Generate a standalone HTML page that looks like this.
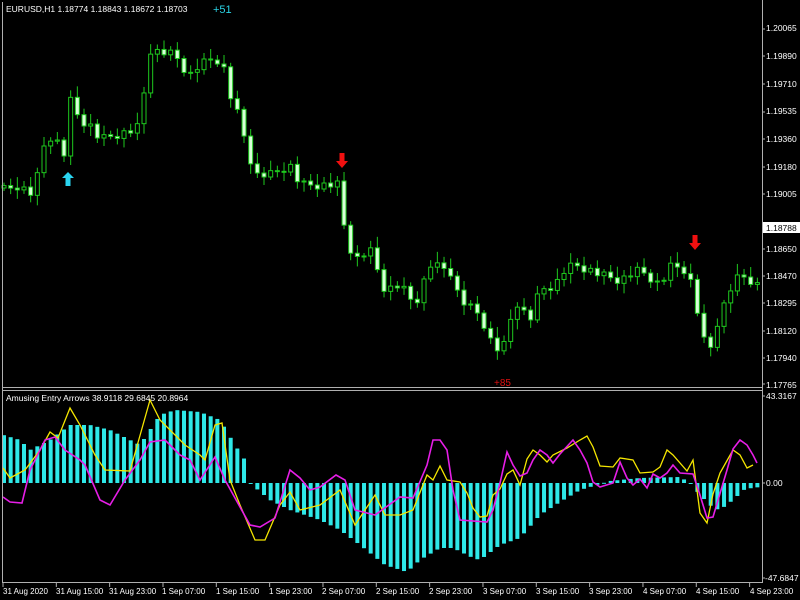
<!DOCTYPE html>
<html><head><meta charset="utf-8"><style>
html,body{margin:0;padding:0;background:#000;width:800px;height:600px;overflow:hidden}
svg{display:block}
text{font-family:"Liberation Sans",sans-serif;font-size:8.5px;fill:#fff}
.t{font-size:8px}
</style></head><body>
<svg id="s" width="800" height="600" viewBox="0 0 800 600">
<rect x="0" y="0" width="800" height="600" fill="#000"/>
<g id="cd"></g><g id="hist"></g>
<polyline id="yl" fill="none" stroke="#f5e600" stroke-width="1.3"/>
<polyline id="mg" fill="none" stroke="#e61ee6" stroke-width="1.6"/>
<line x1="2.5" y1="2" x2="2.5" y2="582" stroke="#b0b0b0"/>
<line x1="762.5" y1="0" x2="762.5" y2="582" stroke="#b0b0b0"/>
<line x1="2" y1="387.5" x2="763" y2="387.5" stroke="#b0b0b0"/>
<line x1="2" y1="390.5" x2="763" y2="390.5" stroke="#b0b0b0"/>
<line x1="2" y1="582.5" x2="763" y2="582.5" stroke="#b0b0b0"/>
<g id="tk"></g>
<text x="6" y="12">EURUSD,H1  1.18774 1.18843 1.18672 1.18703</text>
<text x="213" y="13" style="fill:#2ad4e6;font-size:11px">+51</text>
<text x="494" y="386" style="fill:#e01010;font-size:10px">+85</text>
<text x="6" y="401">Amusing Entry Arrows 38.9118 29.6845 20.8964</text>
<path d="M68 172 L74 178 L70.5 178 L70.5 186 L65.5 186 L65.5 178 L62 178 Z" fill="#2ad4f0"/>
<path d="M342 168 L348 161 L344.5 161 L344.5 153 L339.5 153 L339.5 161 L336 161 Z" fill="#f01010"/>
<path d="M695 250 L701 243 L697.5 243 L697.5 235 L692.5 235 L692.5 243 L689 243 Z" fill="#f01010"/>
<rect x="763" y="222" width="37" height="11" fill="#fff"/>
<text x="766" y="231" style="fill:#000">1.18788</text>
<text x="766" y="31">1.20065</text><text x="766" y="59">1.19890</text><text x="766" y="87">1.19710</text>
<text x="766" y="114">1.19535</text><text x="766" y="142">1.19360</text><text x="766" y="170">1.19180</text>
<text x="766" y="197">1.19005</text><text x="766" y="252">1.18650</text>
<text x="766" y="279">1.18470</text><text x="766" y="306">1.18295</text><text x="766" y="334">1.18120</text>
<text x="766" y="361">1.17940</text><text x="766" y="388">1.17765</text>
<text x="766" y="399">43.3167</text><text x="766" y="486">0.00</text><text x="765" y="581">-47.6847</text>
<text class="t" x="3" y="594">31 Aug 2020</text><text class="t" x="56" y="594">31 Aug 15:00</text><text class="t" x="109" y="594">31 Aug 23:00</text>
<text class="t" x="162" y="594">1 Sep 07:00</text><text class="t" x="216" y="594">1 Sep 15:00</text><text class="t" x="269" y="594">1 Sep 23:00</text>
<text class="t" x="322" y="594">2 Sep 07:00</text><text class="t" x="376" y="594">2 Sep 15:00</text><text class="t" x="429" y="594">2 Sep 23:00</text>
<text class="t" x="483" y="594">3 Sep 07:00</text><text class="t" x="536" y="594">3 Sep 15:00</text><text class="t" x="589" y="594">3 Sep 23:00</text>
<text class="t" x="643" y="594">4 Sep 07:00</text><text class="t" x="696" y="594">4 Sep 15:00</text><text class="t" x="750" y="594">4 Sep 23:00</text>
</svg>
<script>
var NS="http://www.w3.org/2000/svg";
function el(n,a,p){var e=document.createElementNS(NS,n);for(var k in a)e.setAttribute(k,a[k]);document.getElementById(p).appendChild(e);return e;}
function interp(pts,x){for(var i=0;i<pts.length-1;i++){if(x<=pts[i+1][0]){var a=pts[i],b=pts[i+1];return a[1]+(b[1]-a[1])*(x-a[0])/(b[0]-a[0]);}}return pts[pts.length-1][1];}
function P(s){var a=s.split(/[ ,]+/).map(Number),r=[];for(var i=0;i<a.length;i+=2)r.push([a[i],a[i+1]]);return r;}
var close=P("0 188 5 190 20 185 30 195 40 170 45 140 55 135 60 150 65 155 70 100 80 120 90 125 100 140 115 135 135 130 140 125 145 85 150 50 165 53 175 55 185 70 190 75 200 65 210 60 222 60 230 95 240 120 245 140 255 175 270 175 290 165 300 185 320 185 340 185 345 235 355 260 370 250 385 290 400 285 415 305 430 265 450 270 460 300 480 315 495 350 505 345 515 300 530 320 540 290 555 285 565 270 575 265 590 270 600 275 620 280 640 270 660 285 672 265 685 270 695 290 700 335 710 350 718 320 730 290 740 275 750 280 758 285");
var hist=P("0 434 20 440 30 450 50 440 70 425 90 425 110 430 130 440 140 445 160 415 175 410 200 412 220 420 235 445 245 460 250 483 258 490 270 500 290 510 320 520 340 530 360 545 385 565 407 572 420 560 440 548 453 548 473 558 480 560 500 545 520 538 540 515 560 502 580 490 600 484 610 481 640 478 680 477 690 483 700 495 713 508 720 510 733 500 745 489 760 487");
var yl="3,468 10,478 25,470 40,450 50,432 58,438 70,408 80,425 95,455 105,470 130,471 150,400 160,420 185,445 200,455 205,460 215,425 222,423 230,480 240,505 255,540 265,540 280,505 290,492 300,510 320,505 340,490 355,525 375,495 385,515 400,515 413,510 427,475 433,480 440,466 447,480 460,482 467,493 473,508 480,517 487,516 493,495 500,489 507,474 513,470 520,485 527,459 533,450 540,455 547,462 553,455 567,448 580,440 587,436 593,447 600,466 613,467 620,458 633,460 640,473 653,472 660,467 667,450 673,455 687,471 693,460 700,513 707,523 713,494 720,473 733,450 740,455 747,468 753,465";
var mg="3,497 10,502 22,503 30,470 45,440 55,437 65,450 80,460 85,465 100,500 110,505 125,480 140,460 150,442 165,440 180,455 190,460 200,480 215,457 225,480 250,525 260,527 275,518 290,470 300,478 310,490 320,487 336,475 345,480 355,510 375,515 400,497 413,498 427,465 433,440 440,440 447,450 453,490 460,520 487,522 493,510 500,483 507,452 513,465 520,476 527,473 533,460 540,450 547,455 553,463 560,454 573,440 580,450 587,463 593,482 600,487 613,483 620,462 627,478 633,485 640,479 647,488 653,474 660,478 667,473 673,465 680,473 693,474 700,495 707,518 713,517 727,470 733,449 740,440 747,445 753,455 757,463";
document.getElementById("yl").setAttribute("points",yl);
document.getElementById("mg").setAttribute("points",mg);
var sp=6.667,prev=interp(close,0);
for(var i=0;i<114;i++){
 var x=4+sp*i;var c=interp(close,x)+((i*7)%5-2)*2;var o=prev;prev=c;
 var n1=3+((i*13)%9),n2=3+((i*11)%8);
 var hi=Math.min(o,c)-n1,lo=Math.max(o,c)+n2;
 el("line",{x1:x,y1:hi,x2:x,y2:lo,stroke:"#1ec81e","stroke-width":1},"cd");
 var t=Math.min(o,c),h=Math.max(Math.abs(o-c),1);
 if(c<o) el("rect",{x:x-2,y:t,width:4,height:h,fill:"#000",stroke:"#1ec81e","stroke-width":1},"cd");
 else el("rect",{x:x-2,y:t,width:4,height:h,fill:"#d8ffd8",stroke:"#1ec81e","stroke-width":1},"cd");
 var hv=interp(hist,x);var z=483;
 el("rect",{x:x-2,y:Math.min(hv,z),width:4,height:Math.max(Math.abs(hv-z),1),fill:"#2ee8e8"},"hist");
}
for(var k=0;k<15;k++){var tx=3+53.33*k;el("line",{x1:tx,y1:583,x2:tx,y2:587,stroke:"#b0b0b0"},"tk");}
[29,56,84,112,139,167,194,249,276,303,331,358,384,396,483,578].forEach(function(y){el("line",{x1:762,y1:y,x2:765,y2:y,stroke:"#b0b0b0"},"tk");});
</script>
</body></html>
